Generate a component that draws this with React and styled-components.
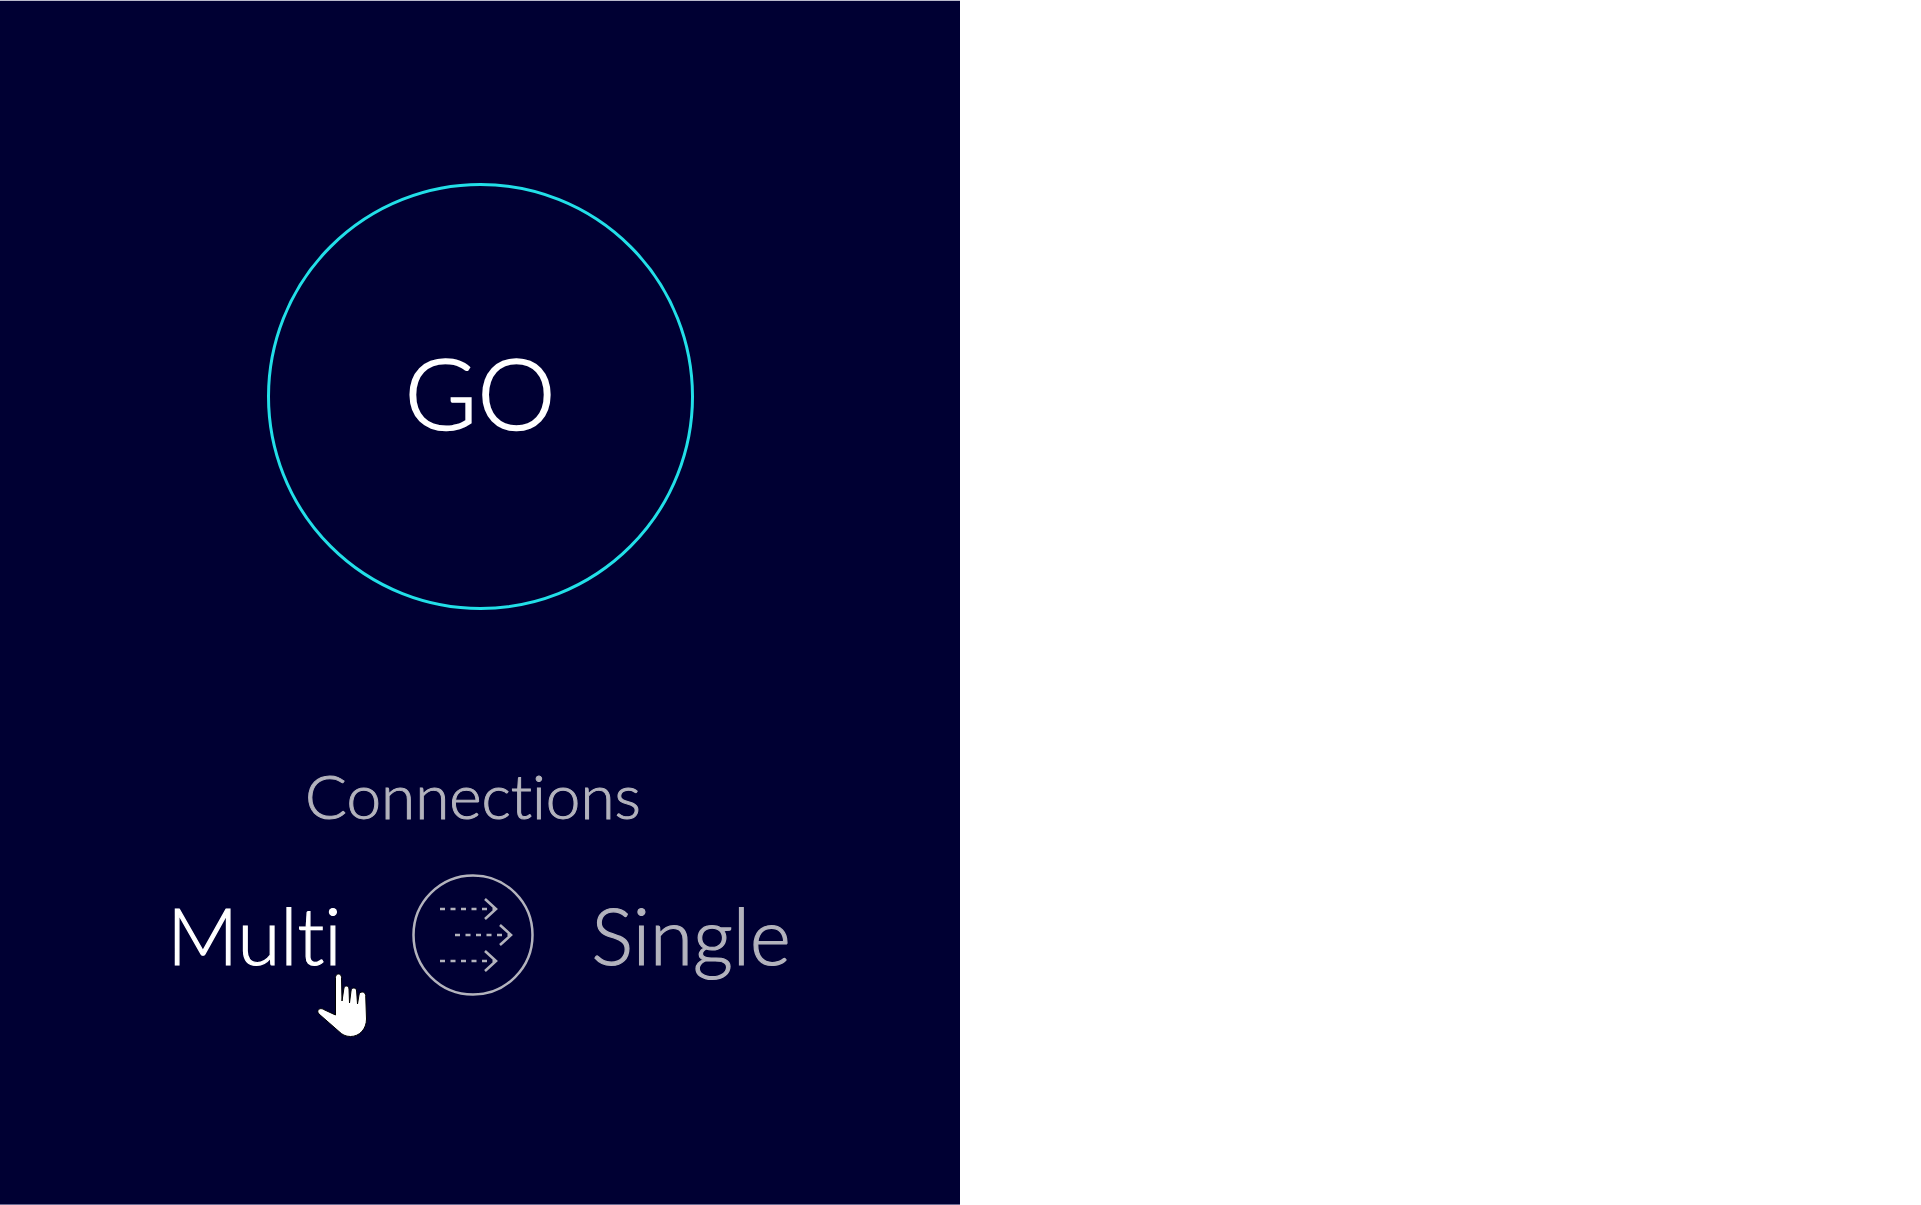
import styled, { createGlobalStyle } from 'styled-components';

const GlobalStyle = createGlobalStyle`
    html, body {
        margin: 0;
        padding: 0;
        background: #ffffff;
    }
`;

export default function App() {
    return (
        <Page>
            <GlobalStyle />
            <Panel>
                <GoButton>GO</GoButton>
                <Connections>Connections</Connections>
                <ToggleRow>
                    <Option active>
                        Multi
                        <HandCursor viewBox="0 0 90 90">
                            <path
                                d="M37.500 23c1.800 0 3 1.400 3 3.500L41 50l1.800-12c.2-2 1.200-3 2.600-3s2.400 1 2.600 3l.5 14L50 40c.2-2 1.200-3 2.800-3s2.600 1 2.800 3l.9 13L58 44c.3-2 1.500-3 3.200-3s3.300 1.200 3.500 3.500l.8 23.500c0 10-7 17.500-16 17.500-5 0-8.500-2-11.500-5L18 63c-1.500-1.500-1.500-3.500-.3-4.500 1.300-1.200 3-1.200 5 0L34.500 64V26.500c0-2.100 1.200-3.500 3-3.500z"
                                fill="#ffffff"
                                stroke="#000000"
                                strokeWidth="1"
                            />
                        </HandCursor>
                    </Option>
                    <ModeIcon viewBox="0 0 122 122">
                        <circle cx="61" cy="61" r="59.500" fill="none" stroke="#b3b3bd" strokeWidth="2.500" />
                        <g fill="none" stroke="#b3b3bd" strokeWidth="2.600">
                            <path d="M28 35h55" strokeDasharray="5 5.500" />
                            <path d="M73 25l11 10-11 10" />
                            <path d="M43 61h55" strokeDasharray="5 5.500" />
                            <path d="M88 51l11 10-11 10" />
                            <path d="M28 87h55" strokeDasharray="5 5.500" />
                            <path d="M73 77l11 10-11 10" />
                        </g>
                    </ModeIcon>
                    <Option>Single</Option>
                </ToggleRow>
            </Panel>
        </Page>
    );
}

const Page = styled.div`
    width: 100%;
    height: 1205px;
    background: #ffffff;
    overflow: hidden;
`;

const Panel = styled.div`
    box-sizing: border-box;
    width: 960px;
    height: 1205px;
    background: #000033;
    border-top: 1px solid #b9b9cc;
    border-bottom: 1px solid #6a6a92;
    display: flex;
    flex-direction: column;
    align-items: center;
    padding-top: 182px;
    font-family: Lato, "Open Sans", sans-serif;
    font-weight: 300;
    font-variant-ligatures: none;
`;

const GoButton = styled.div`
    box-sizing: border-box;
    width: 427px;
    height: 427px;
    border: 3px solid #22dfe8;
    border-radius: 50%;
    display: flex;
    align-items: center;
    justify-content: center;
    padding-bottom: 10px;
    color: #ffffff;
    font-size: 99px;
    line-height: 1;
    -webkit-text-stroke: 1.6px currentColor;
`;

const Connections = styled.div`
    margin-top: 148px;
    margin-right: 14px;
    color: #b3b3bd;
    font-size: 62px;
    line-height: 74px;
    -webkit-text-stroke: 1px currentColor;
`;

const ToggleRow = styled.div`
    display: flex;
    align-items: center;
    margin-top: 42px;
    margin-left: -2px;
`;

const Option = styled.div`
    position: relative;
    color: ${(props) => (props.active ? '#ffffff' : '#b3b3bd')};
    font-size: 78px;
    line-height: 94px;
    -webkit-text-stroke: 1.2px currentColor;
`;

const ModeIcon = styled.svg`
    width: 122px;
    height: 122px;
    margin: 0 58px 0 70px;
`;

const HandCursor = styled.svg`
    position: absolute;
    left: 134px;
    top: 63px;
    width: 90px;
    height: 90px;
`;
